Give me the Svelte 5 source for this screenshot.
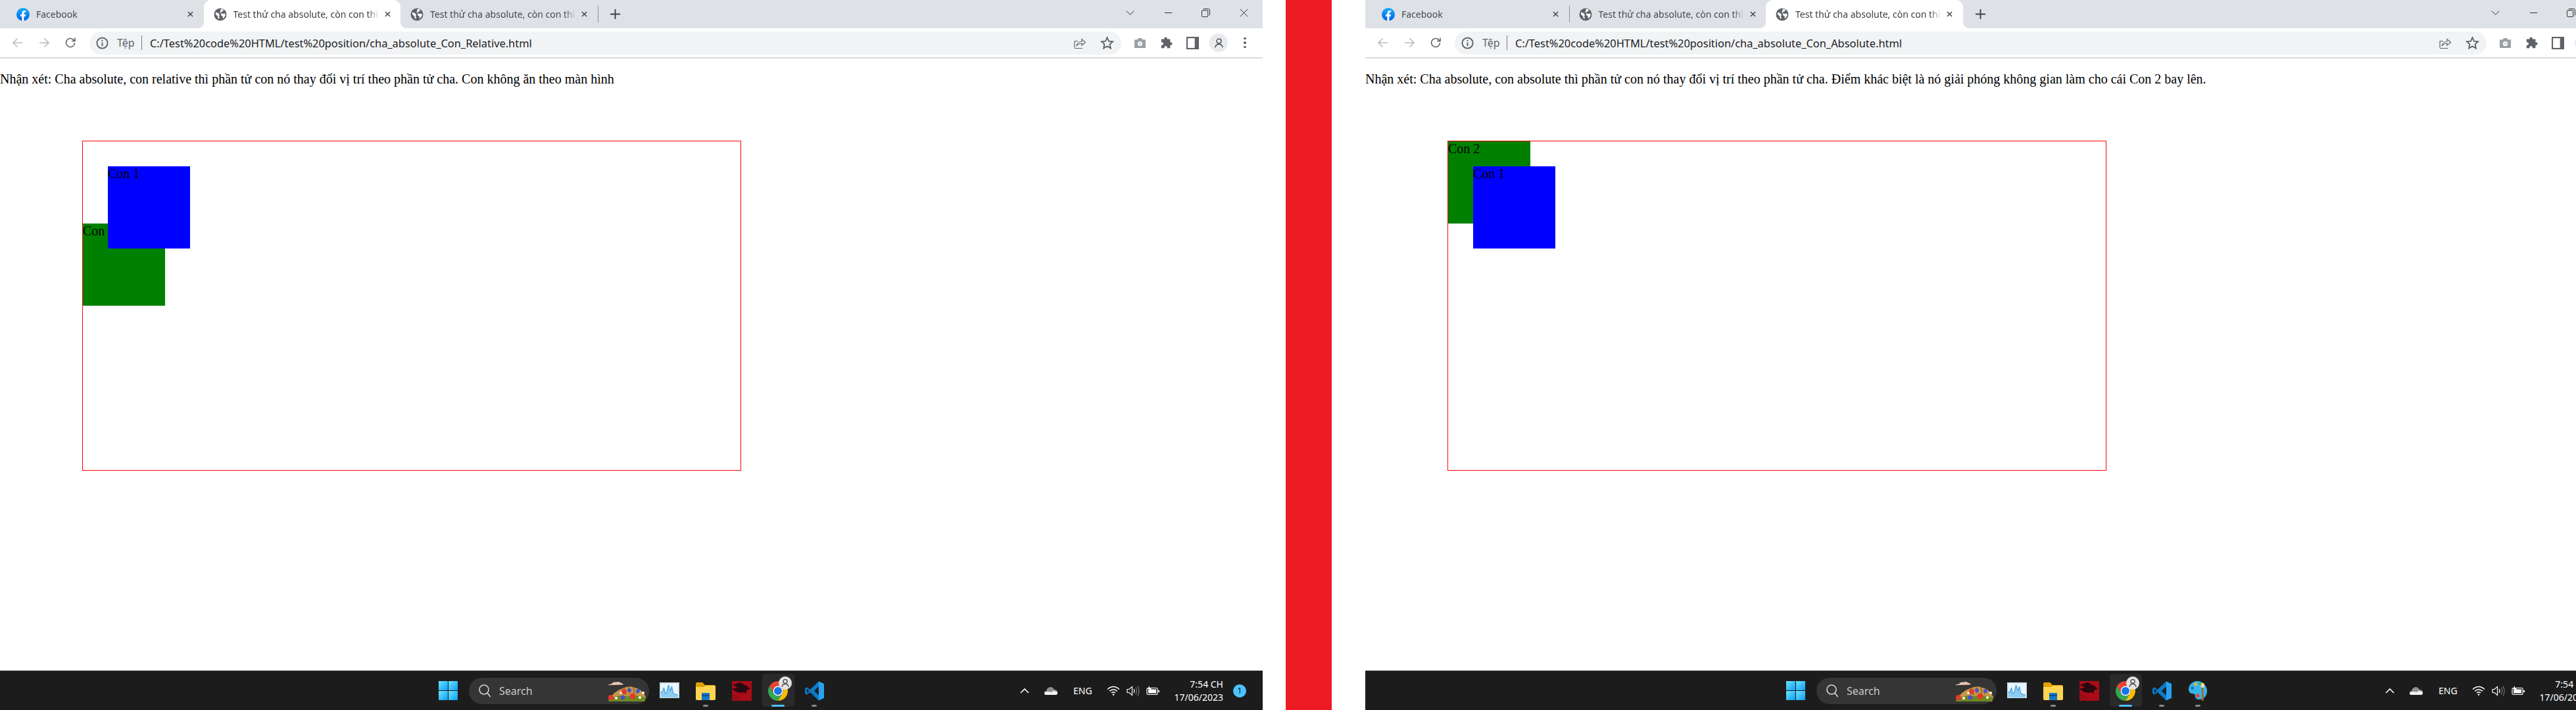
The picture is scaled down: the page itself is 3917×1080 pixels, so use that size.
<script>
  const windows = [
    {
      id: 'one',
      active: 1,
      sep: 2,
      url: 'C:/Test%20code%20HTML/test%20position/cha_absolute_Con_Relative.html',
      note: 'Nhận xét: Cha absolute, con relative thì phần tử con nó thay đổi vị trí theo phần tử cha. Con không ăn theo màn hình',
      paint: false
    },
    {
      id: 'two',
      active: 2,
      sep: 0,
      url: 'C:/Test%20code%20HTML/test%20position/cha_absolute_Con_Absolute.html',
      note: 'Nhận xét: Cha absolute, con absolute thì phần tử con nó thay đổi vị trí theo phần tử cha. Điểm khác biệt là nó giải phóng không gian làm cho cái Con 2 bay lên.',
      paint: true
    }
  ];
  const tabs = ['Facebook', 'Test thử cha absolute, còn con thì', 'Test thử cha absolute, còn con thì'];
</script>

{#snippet fb()}
  <svg class="fav" viewBox="0 0 20 20">
    <defs><linearGradient id="fbg" x1="0" y1="0" x2="0" y2="1"><stop offset="0" stop-color="#18acfe" /><stop offset="1" stop-color="#0163e0" /></linearGradient></defs>
    <circle cx="10" cy="10" r="10" fill="url(#fbg)" />
    <path d="M8.4 20v-7H6v-3h2.4V8c0-2.5 1.5-3.9 3.7-3.9l2.1.2v2.5h-1.2c-1.200 0-1.600.8-1.600 1.500V10h2.700l-.4 3h-2.300v7z" fill="#fff" />
  </svg>
{/snippet}

{#snippet globe()}
  <svg class="fav" viewBox="0 0 20 20">
    <circle cx="10" cy="10" r="9.500" fill="#5f6368" />
    <path d="M3 6.500l4 1.500 2 2.500-1 2 1 3.500-2 .5-1-4-3-2.500zM11 1.500l4 1-1 2.500-2.500 1-.5 2 3 1 2.500-.5 1.500 2-2 4-2.500 2 .5-3-3-2.500 .5-3-2-1 1-4z" fill="#fff" />
  </svg>
{/snippet}

{#snippet monitorApp()}
  <svg class="tb tb-mon" viewBox="0 0 30 24">
    <rect width="30" height="24" fill="#c4d3de" />
    <rect x="1.500" y="1.500" width="27" height="21" fill="#e9f6fd" />
    <path d="M1.500 22.500V15l3-1 2-6 2 9 2-1 3-12 3 9 2-7 2 10 3 2 4 1v4z" fill="#8ccdf3" />
    <path d="M1.500 15l3-1 2-6 2 9 2-1 3-12 3 9 2-7 2 10 3 2 4 1" fill="none" stroke="#2a8ed8" stroke-width="1" />
  </svg>
{/snippet}

{#snippet folder()}
  <svg class="tb tb-folder" viewBox="0 0 30 28">
    <path d="M0 3a2 2 0 0 1 2-2h8l4 4h14a2 2 0 0 1 2 2v4H0z" fill="#e0a100" />
    <path d="M0 8h12l3-2h13a2 2 0 0 1 2 2v18a2 2 0 0 1-2 2H2a2 2 0 0 1-2-2z" fill="#ffd451" />
    <rect x="9" y="17" width="12" height="11" fill="#1277c9" />
    <rect x="9" y="20" width="12" height="2" fill="#0a4f8c" />
  </svg>
{/snippet}

{#snippet dragon()}
  <svg class="tb tb-dragon" viewBox="0 0 30 30">
    <rect width="30" height="30" fill="#a90c16" />
    <path d="M0 6l7-2 4-2 4 1 4 3 4 1 1 2 4 3-4 1-2 2-1 4-3-2-4 1-6-1-5-3-3-3 5 0 3-1-4-3z" fill="#260a10" />
    <path d="M0 21q8 2 13 6M0 25q5 1 8 5" fill="none" stroke="#5e1018" stroke-width="1" />
  </svg>
{/snippet}

{#snippet chrome()}
  <svg class="tb tb-chrome" viewBox="0 0 30 30">
    <path d="M2.010 7.500A15 15 0 0 1 27.990 7.500H15A7.500 7.500 0 0 0 8.500 18.750z" fill="#ea4335" />
    <path d="M27.990 7.500A15 15 0 0 1 15 30L21.500 18.750A7.500 7.500 0 0 0 15 7.500z" fill="#fbbc04" />
    <path d="M15 30A15 15 0 0 1 2.010 7.500L8.500 18.750A7.500 7.500 0 0 0 21.500 18.750z" fill="#34a853" />
    <circle cx="15" cy="15" r="7.500" fill="#fff" />
    <circle cx="15" cy="15" r="6" fill="#1a73e8" />
  </svg>
{/snippet}

{#snippet vscode()}
  <svg class="tb tb-vs" viewBox="0 0 30 30">
    <path d="M21.500 0L30 4v22l-8.500 4L8 17l-5 4-3-2V11l3-2 5 4z" fill="#0a7bc9" />
    <path d="M21.500 0L30 4v22l-8.500 4z" fill="#2aa1ef" />
    <path d="M21.500 8l-7 7 7 7zM3 11.500v7l3.500-3.500z" fill="#1c1c1c" />
  </svg>
{/snippet}

{#snippet palette()}
  <svg class="tb tb-paint" viewBox="0 0 30 32">
    <path d="M14 1C6 1 0 7 0 14c0 6 5 7 7 7s3 1 3 3 1 6 7 6c8 0 12-7 12-14S22 1 14 1z" fill="#37b4ea" />
    <circle cx="6" cy="12" r="2.500" fill="#1a73c9" />
    <circle cx="11" cy="6" r="2.500" fill="#f0c020" />
    <circle cx="18" cy="5" r="2.500" fill="#3cb54a" />
    <circle cx="14" cy="24" r="3" fill="#e0483e" />
    <rect x="20.500" y="11" width="3" height="21" fill="#a5682a" />
    <path d="M19 11l1-7h4l1 7z" fill="#f3dcaa" />
  </svg>
{/snippet}

<div class="stage">
  {#each windows as w, wi}
    <section class="win {w.id}">
      <header class="strip">
        {#each tabs as t, i}
          <div class="tab" class:active={w.active === i}>
            {#if i === 0}{@render fb()}{:else}{@render globe()}{/if}
            <span class="title">{t}</span>
            <svg class="x" viewBox="0 0 10 10"><path d="M1 1l8 8M9 1l-8 8" /></svg>
            {#if w.sep === i}<i class="sep"></i>{/if}
          </div>
        {/each}
        <svg class="plus" viewBox="0 0 16 16"><path d="M8 0v16M0 8h16" /></svg>
        <div class="caption">
          <span class="cap"><svg viewBox="0 0 14 8"><path d="M1 1l6 6 6-6" /></svg></span>
          <span class="cap"><svg viewBox="0 0 14 8"><path d="M1 4h12" /></svg></span>
          <span class="cap"><svg viewBox="0 0 14 14"><path d="M3 1.500Q3 .5 4 .5h7q2.500 0 2.500 2.500v7q0 1-1 1M1.500 3h8q1 0 1 1v8q0 1.500-1 1.500h-8q-1 0-1-1.500V4q0-1 1-1z" /></svg></span>
          <span class="cap"><svg viewBox="0 0 14 14"><path d="M1 1l12 12M13 1L1 13" /></svg></span>
        </div>
      </header>

      <div class="toolbar">
        <span class="nav"><svg class="ic dim" viewBox="0 0 20 20"><path d="M17 10H3.500M9.500 3.500L3 10l6.500 6.500" /></svg></span>
        <span class="nav"><svg class="ic dim" viewBox="0 0 20 20"><path d="M3 10h13.500M10.500 3.500L17 10l-6.500 6.500" /></svg></span>
        <span class="nav"><svg class="ic" viewBox="0 0 20 20"><path d="M16.500 10a6.500 6.500 0 1 1-2-4.700L17 7.500M17 2.500v5h-5" /></svg></span>
        <div class="omni">
          <svg class="ic info" viewBox="0 0 20 20"><circle cx="10" cy="10" r="8.500" /><path d="M10 9v6M10 5v2" /></svg>
          <span class="scheme">Tệp</span>
          <i class="bar"></i>
          <span class="url">{w.url}</span>
          <span class="omni-end">
            <svg class="ic share" viewBox="0 0 20 20"><path d="M2 7.500V17.500M2 18.500h12M2 7.500h5M5 15q1-6.500 8-7V4.500L18.500 9.500 13 14v-3q-5 0-8 4z" /></svg>
            <svg class="ic star" viewBox="0 0 20 20"><path d="M10 2l2.400 5.300 5.800.6-4.300 3.900 1.200 5.700L10 14.600l-5.100 2.900 1.200-5.700L1.800 7.900l5.800-.6z" /></svg>
          </span>
        </div>
        <span class="act"><svg class="solid cam" viewBox="0 0 20 20"><path d="M1 6q0-1.500 1.500-1.500H6L7.500 2h5L14 4.500h3.500Q19 4.500 19 6v11q0 1-1.500 1h-15Q1 18 1 17z" /><circle class="hole" cx="10" cy="11" r="3" /></svg></span>
        <span class="act"><svg class="solid" viewBox="0 0 21 21"><path d="M7 4V3a2.500 2.500 0 0 1 5 0v1h5v5h1a2.500 2.500 0 0 1 0 5h-1v5h-5v-1a2.500 2.500 0 0 0-5 0v1H2v-5h1a2.500 2.500 0 0 0 0-5H2V4z" /></svg></span>
        <span class="act"><svg class="solid" viewBox="0 0 18 18"><rect width="18" height="18" /><rect class="hole" x="2" y="2" width="10" height="14" /></svg></span>
        <span class="avatar"><svg class="ic" viewBox="0 0 20 20"><circle cx="10" cy="6.500" r="4" /><path d="M3.500 18q.5-6 6.500-6t6.500 6" /></svg></span>
        <span class="dots"><i></i><i></i><i></i></span>
      </div>

      <main class="page">
        <p class="note">{w.note}</p>
        <div class="frame">
          <div class="child blue">Con 1</div>
          <div class="child green">Con 2</div>
        </div>
      </main>

      <footer class="taskbar">
        <svg class="start" viewBox="0 0 29 29">
          <defs><linearGradient id="w{wi}" x1="0" y1="0" x2="1" y2="1"><stop offset="0" stop-color="#6de6ff" /><stop offset="1" stop-color="#0c9cf5" /></linearGradient></defs>
          <rect width="14" height="14" fill="url(#w{wi})" /><rect x="15" width="14" height="14" fill="url(#w{wi})" /><rect y="15" width="14" height="14" fill="url(#w{wi})" /><rect x="15" y="15" width="14" height="14" fill="url(#w{wi})" />
        </svg>
        <div class="search">
          <svg class="mag" viewBox="0 0 18 20"><circle cx="8" cy="8" r="7" /><path d="M13 13l4.500 6" /></svg>
          <span class="search-text">Search</span>
          <svg class="flowers" viewBox="0 0 60 30">
            <path d="M1 7q2-2 6-2 2-4 7-3 4-2 7 1 3 0 4 3z" fill="#eac4b4" transform="translate(0 -1) scale(1 .9)" />
            <path d="M3 28Q9 15 24 10q10-5 18-1 10 1 17 14l-2 7H3z" fill="#c4984a" />
            <path d="M26 10l3 10M33 8l1 10M40 8l2 10M47 11l-1 8" stroke="#8a6428" stroke-width="1.500" fill="none" />
            <path d="M1 29q12-10 28-7 15-3 30 2-1 6-6 6H6q-4 0-5-1z" fill="#6f8a1e" />
            <circle cx="6" cy="24" r="4" fill="#e43a28" />
            <circle cx="26" cy="15" r="4" fill="#e43a28" />
            <circle cx="39" cy="22" r="4.500" fill="#e43a28" />
            <circle cx="34" cy="13" r="3" fill="#4a4fd0" />
            <circle cx="47" cy="14" r="3" fill="#4a4fd0" />
            <circle cx="24" cy="24" r="3.500" fill="#4a4fd0" />
            <circle cx="14" cy="25" r="2" fill="#fff" />
            <circle cx="21" cy="17" r="1.800" fill="#fff" />
            <circle cx="50" cy="24" r="2" fill="#fff" />
            <circle cx="55" cy="17" r="2" fill="#fff" />
          </svg>
        </div>
        <div class="apps">
          <span class="app">{@render monitorApp()}</span>
          <span class="app run">{@render folder()}</span>
          <span class="app">{@render dragon()}</span>
          <span class="app focus">
            {@render chrome()}
            <svg class="pbadge" viewBox="0 0 20 20"><circle cx="10" cy="10" r="10" fill="#e4e4e4" /><circle cx="10" cy="7.500" r="3" fill="none" stroke="#555" stroke-width="1.500" /><path d="M5 16q.5-4.500 5-4.500t5 4.500" fill="none" stroke="#555" stroke-width="1.500" /></svg>
          </span>
          <span class="app run">{@render vscode()}</span>
          {#if w.paint}<span class="app run">{@render palette()}</span>{/if}
        </div>
        <div class="tray">
          <svg class="chev" viewBox="0 0 14 8"><path d="M1 7l6-6 6 6" /></svg>
          <svg class="cloud" viewBox="0 0 20 13"><path d="M3 13q-3 0-3-3t3-3q1-5 6-6 4 0 6 4 5 0 5 4.500 0 3.500-3 3.500z" fill="#8f8f8f" /><path d="M3 13q-3 0-3-2.500T6 8l5 1 2-2q7 0 7 3 0 3-3 3z" fill="#f2f2f2" /></svg>
          <span class="lang">ENG</span>
          <svg class="wifi" viewBox="0 0 20 15"><path d="M1 5.500q9-8 18 0M4 8.500q6-5.500 12 0M7 11q3-2.500 6 0" /><circle cx="10" cy="13.500" r="1.300" /></svg>
          <svg class="vol" viewBox="0 0 20 16"><path d="M1 5.500h3L8.500 1.500v13L4 10.500H1zM11 5q2 3 0 6" /><path class="faint" d="M14 2.500q3 5.500 0 11M17 .5q4 7.500 0 15" /></svg>
          <svg class="batt" viewBox="0 0 20 15"><rect x="1" y="3.500" width="16" height="10" rx="2" /><path class="fill" d="M3 5.500h12v6H3z" /><path class="fill" d="M18 7h2v3h-2zM5 0L2 5h3l-1 4 4-5H5z" /></svg>
          <div class="clock"><span>7:54 CH</span><span>17/06/2023</span></div>
          <span class="notif">1</span>
        </div>
      </footer>
    </section>
    {#if wi === 0}<div class="divider"></div>{/if}
  {/each}
</div>

<style>
  :global(body) { margin: 0; background: #fff; }
  .stage { display: flex; width: 3917px; height: 1080px; overflow: hidden; background: #fff; }
  .win { flex: none; width: 1920px; height: 1080px; display: flex; flex-direction: column; position: relative; background: #fff; }
  .divider { flex: none; width: 70px; height: 1080px; margin: 0 51px 0 35px; background: #ed1c24; }

  .strip { flex: none; height: 43px; background: #dee1e6; display: flex; align-items: center; padding-left: 10px; box-sizing: border-box; font-family: "Noto Sans", sans-serif; }
  .tab { flex: none; width: 299.5px; height: 43px; display: flex; align-items: center; padding: 0 14px; box-sizing: border-box; position: relative; color: #45494e; font-size: 14px; }
  .tab.active { background: #fff; border-radius: 11px 11px 0 0; color: #3c4043; }
  .tab.active::before, .tab.active::after { content: ""; position: absolute; bottom: 0; width: 10px; height: 10px; }
  .tab.active::before { left: -10px; background: radial-gradient(circle at 0 0, transparent 10px, #fff 10.500px); }
  .tab.active::after { right: -10px; background: radial-gradient(circle at 100% 0, transparent 10px, #fff 10.500px); }
  .fav { width: 20px; height: 20px; flex: none; margin-left: 1px; }
  .title { margin-left: 10px; width: 222px; overflow: hidden; white-space: nowrap; flex: none; -webkit-mask-image: linear-gradient(90deg, #000 92%, transparent); mask-image: linear-gradient(90deg, #000 92%, transparent); }
  .x { width: 9px; height: 9px; flex: none; margin-left: 8px; fill: none; stroke: #3c4043; stroke-width: 1.500; }
  .sep { position: absolute; right: -1px; top: 9px; bottom: 9px; width: 1px; background: #8f9297; }
  .plus { width: 15px; height: 15px; flex: none; margin-left: 19px; fill: none; stroke: #3c4043; stroke-width: 2; }
  .caption { margin-left: auto; display: flex; align-self: stretch; }
  .cap { width: 57.500px; display: flex; align-items: center; justify-content: center; height: 38px; }
  .cap svg { width: 13px; height: 13px; fill: none; stroke: #1f1f1f; stroke-width: 1; }

  .toolbar { flex: none; height: 46px; box-sizing: border-box; border-bottom: 2px solid #dadce0; padding: 5px 0 5px 7px; display: flex; align-items: center; background: #fff; font-family: "Noto Sans", sans-serif; }
  .nav { flex: none; width: 40px; display: flex; justify-content: center; }
  .ic { width: 20px; height: 20px; fill: none; stroke: #5f6368; stroke-width: 1.600; flex: none; }
  .ic.dim { stroke: #b9bbbe; }
  .omni { flex: none; width: 1569px; height: 35px; margin-left: 9px; border-radius: 18px; background: #f1f3f4; display: flex; align-items: center; padding: 0 11px 0 10px; box-sizing: border-box; }
  .info { width: 19px; height: 19px; stroke-width: 2; margin-right: 13px; }
  .scheme { font-size: 16px; color: #5f6368; flex: none; width: 37px; }
  .bar { width: 1px; height: 22px; background: #777a7e; flex: none; margin-right: 12px; }
  .url { font-size: 16.400px; color: #202124; white-space: nowrap; }
  .omni-end { margin-left: auto; display: flex; gap: 21px; align-items: center; }
  .share { stroke-width: 1.200; }
  .star { stroke-width: 1.800; width: 21px; height: 21px; }
  .act { flex: none; width: 40px; display: flex; justify-content: center; }
  .omni + .act { margin-left: 8px; }
  .solid { width: 19px; height: 19px; fill: #5f6368; }
  .solid.cam { fill: #9aa0a6; }
  .solid .hole { fill: #fff; }
  .solid.cam .hole { fill: #d9dbde; stroke: #fff; stroke-width: 1.500; }
  .avatar { flex: none; width: 28px; height: 28px; border-radius: 50%; background: #e8eaed; margin: 0 6px; display: flex; align-items: center; justify-content: center; }
  .avatar .ic { width: 17px; height: 17px; stroke: #3c4043; }
  .dots { flex: none; width: 40px; display: flex; flex-direction: column; align-items: center; gap: 3px; }
  .dots i { width: 3.500px; height: 3.500px; border-radius: 50%; background: #5f6368; }

  .page { flex: 1; min-height: 0; background: #fff; font-family: "Liberation Serif", serif; font-size: 20px; line-height: 23px; color: #000; overflow: hidden; }
  .note { margin: 20px 0 82px; white-space: nowrap; }
  .frame { margin-left: 125px; width: 1000px; height: 500px; border: 1px solid #f00; position: relative; }
  .child { width: 125px; height: 125px; }
  .blue { position: absolute; left: 38px; top: 38px; background: #00f; z-index: 1; }
  .green { background: #008000; }
  .one .green { margin-top: 125px; }

  .taskbar { flex: none; height: 60px; box-sizing: border-box; border-top: 1px solid #353535; background: #1c1c1c; display: flex; align-items: center; font-family: "Noto Sans", sans-serif; color: #fff; padding-left: 667px; }
  .two .taskbar { padding-left: 640px; }
  .start { width: 29px; height: 29px; flex: none; }
  .search { flex: none; width: 274px; height: 40px; margin-left: 17px; border-radius: 20px; background: #353535; display: flex; align-items: center; padding: 0 4px 0 15px; box-sizing: border-box; }
  .mag { width: 18px; height: 20px; fill: none; stroke: #d8d8d8; stroke-width: 1.600; flex: none; }
  .search-text { margin-left: 13px; font-size: 16px; color: #c9c9c9; }
  .flowers { width: 60px; height: 30px; margin-left: auto; flex: none; margin-top: 2px; }
  .apps { display: flex; margin-left: 3.500px; }
  .app { flex: none; width: 55px; height: 59px; display: flex; align-items: center; justify-content: center; position: relative; }
  .app.run::after, .app.focus::after { content: ""; position: absolute; bottom: 5px; left: 50%; width: 8px; height: 3px; margin-left: -4px; border-radius: 2px; background: #8b8b8b; }
  .app.focus::before { content: ""; position: absolute; left: 3px; right: 3px; top: 4px; bottom: 5px; border-radius: 5px; background: #2a2a2a; }
  .app.focus::after { width: 20px; margin-left: -10px; background: #4cc2ff; z-index: 1; }
  .tb { position: relative; z-index: 1; flex: none; }
  .tb-mon { width: 30px; height: 24px; margin-top: -1px; }
  .tb-folder { width: 30px; height: 28px; }
  .tb-dragon { width: 30px; height: 30px; }
  .tb-chrome { width: 30px; height: 30px; }
  .tb-vs { width: 29px; height: 30px; }
  .tb-paint { width: 29px; height: 31px; }
  .pbadge { position: absolute; left: 28px; top: 8px; width: 20px; height: 20px; z-index: 2; }

  .tray { position: absolute; right: 25px; bottom: 0; height: 59px; display: flex; align-items: center; }
  .chev { width: 14px; height: 8px; fill: none; stroke: #fff; stroke-width: 1.600; flex: none; }
  .cloud { width: 20px; height: 13px; margin-left: 23px; flex: none; }
  .lang { width: 28px; margin-left: 24px; font-size: 14px; flex: none; white-space: nowrap; }
  .wifi { width: 20px; height: 15px; margin-left: 23px; fill: none; stroke: #fff; stroke-width: 1.300; flex: none; }
  .wifi circle { fill: #fff; stroke: none; }
  .vol { width: 20px; height: 16px; margin-left: 10px; fill: none; stroke: #fff; stroke-width: 1.200; flex: none; }
  .vol .faint { stroke: #777; }
  .batt { width: 20px; height: 15px; margin-left: 10px; fill: none; stroke: #fff; stroke-width: 1.200; flex: none; }
  .batt .fill { fill: #fff; stroke: none; }
  .clock { width: 97px; display: flex; flex-direction: column; align-items: flex-end; font-size: 14px; line-height: 20px; flex: none; color: #fff; }
  .notif { width: 20px; height: 20px; margin-left: 15px; border-radius: 50%; background: #4cc2ff; color: #111; font-size: 12px; display: flex; align-items: center; justify-content: center; flex: none; }
</style>
